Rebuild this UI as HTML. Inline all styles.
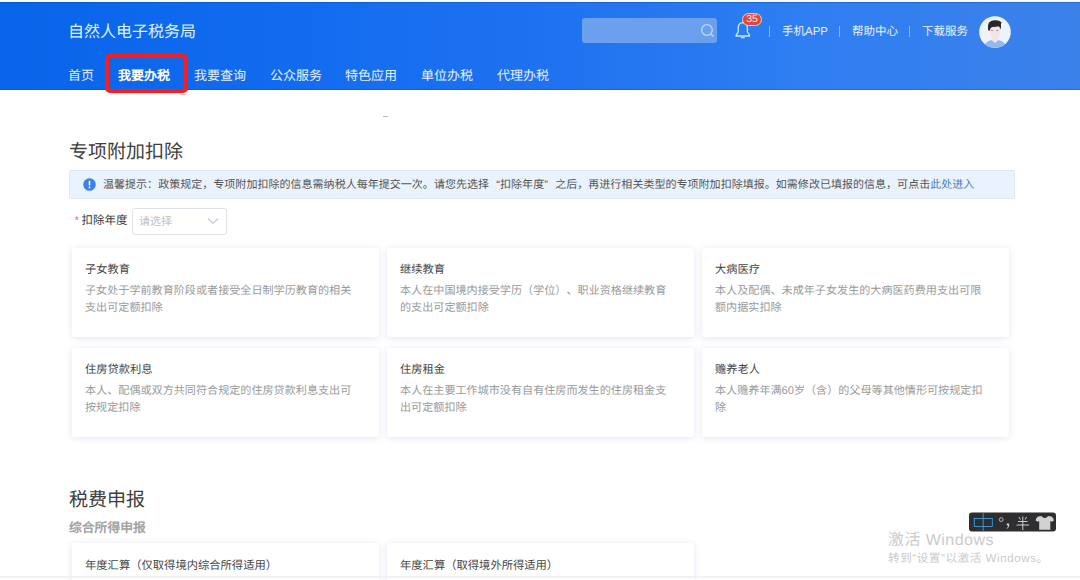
<!DOCTYPE html>
<html lang="zh-CN"><head><meta charset="utf-8">
<style>
*{margin:0;padding:0;box-sizing:border-box}
html,body{width:1080px;height:580px;overflow:hidden;background:#fff;text-rendering:geometricPrecision;text-spacing-trim:space-all;font-family:"Liberation Sans",sans-serif;color:#333}
.hdr{position:absolute;left:0;top:2px;width:1080px;height:88px;box-shadow:inset 0 1px 0 rgba(20,60,140,0.35),inset 0 -1px 0 rgba(20,60,140,0.3);background:linear-gradient(90deg,#0964e9 0%,#136cf0 29%,#1f72f0 51%,#2f7ef2 75%,#3c81ea 100%)}
.topline{position:absolute;left:0;top:0;width:1080px;height:2px;background:#f4fbfb}
.abs{position:absolute;white-space:nowrap}
.title{left:68px;top:24px;font-size:16px;color:#dff2fa;line-height:18px}
.nav{top:68px;font-size:13px;margin-left:-1px;color:#e6f0fb;line-height:15px}
.nav.b{font-weight:bold;color:#fff}
.redbox{position:absolute;left:105px;top:54px;width:83px;height:39px;border:4px solid #fb1c1c;border-radius:5px}
.search{position:absolute;left:582px;top:18px;width:135px;height:25px;background:#6ba0ef;border-radius:3px}
.rt{top:25px;font-size:11.5px;color:#e8f1fc;line-height:14px}
.sep{position:absolute;top:26px;width:1px;height:11px;background:#8cb4f2}
.page-title{font-size:19px;color:#404040;line-height:22px}
.info{position:absolute;left:69px;top:169.5px;width:946px;height:29.5px;background:#eaf3fd;border:1px solid #dfe7f1;border-radius:1.5px}
.info .ic{position:absolute;left:14px;top:8px;width:12px;height:12px;border-radius:50%;background:#3b82e6}
.info .ic:after{content:"";position:absolute;left:5px;top:2.5px;width:2px;height:4.5px;background:#fff;box-shadow:0 6px 0 -0px #fff}
.info .t{position:absolute;left:33px;top:8px;font-size:11px;line-height:13px;color:#555;white-space:nowrap;letter-spacing:0.03px}
.info .t a{color:#4f7bb8;text-decoration:none}
.card{position:absolute;width:307px;height:89px;background:#fff;border-radius:3px;box-shadow:0 1px 6px rgba(110,110,190,0.19)}
.card .h{position:absolute;left:13px;top:16px;font-size:11.25px;line-height:13px;color:#454545;white-space:nowrap}
.card .d{position:absolute;left:13px;top:35px;width:272px;font-size:11.1px;line-height:16.6px;color:#9a9a9a}
</style></head><body>
<div class="topline"></div>
<div class="hdr"></div>
<div class="abs title">自然人电子税务局</div>
<div class="abs nav" style="left:69px">首页</div>
<div class="abs nav b" style="left:119px">我要办税</div>
<div class="abs nav" style="left:195px">我要查询</div>
<div class="abs nav" style="left:271px">公众服务</div>
<div class="abs nav" style="left:346px">特色应用</div>
<div class="abs nav" style="left:422px">单位办税</div>
<div class="abs nav" style="left:498px">代理办税</div>
<div class="redbox"></div>

<div class="search"></div>
<svg class="abs" style="left:699px;top:22px" width="18" height="18" viewBox="0 0 18 18"><circle cx="8" cy="8" r="5.3" fill="none" stroke="#bfdcf6" stroke-width="1.2"/><line x1="12" y1="12" x2="14.5" y2="14.5" stroke="#bfdcf6" stroke-width="1.2"/></svg>
<svg class="abs" style="left:733px;top:20px" width="20" height="20" viewBox="0 0 20 20"><path d="M3 16 Q3 15 4.3 13.5 L5.2 12 L5.2 8 Q5.3 2.8 9.8 2.6 Q14.3 2.8 14.4 8 L14.4 12 L15.4 13.5 Q16.6 15 16.6 16 Z" fill="none" stroke="#c4eef6" stroke-width="1.3" stroke-linejoin="round"/><path d="M8.3 17.6 L11.3 17.6" stroke="#b9e6f2" stroke-width="1.2" stroke-linecap="round"/></svg>
<div class="abs" style="left:742px;top:12.5px;width:20px;height:13px;border-radius:7px;background:#dc4a3c;border:1.2px solid #f0c8c8;color:#fde8e0;font-size:10.5px;line-height:11px;text-align:center;padding-top:0.5px;letter-spacing:-0.2px">35</div>
<div class="sep" style="left:769px"></div>
<div class="abs rt" style="left:782px">手机APP</div>
<div class="sep" style="left:839px"></div>
<div class="abs rt" style="left:852px">帮助中心</div>
<div class="sep" style="left:909px"></div>
<div class="abs rt" style="left:922px">下载服务</div>
<svg class="abs" style="left:979px;top:15.8px" width="32" height="32" viewBox="0 0 32 32">
<defs><clipPath id="cc"><circle cx="16" cy="16" r="15.8"/></clipPath></defs>
<circle cx="16" cy="16" r="15.8" fill="#ecf4fa"/>
<g clip-path="url(#cc)">
<path d="M4 33 Q5 25.5 13 24 L16 27 L19 24 Q27 25.5 28 33 Z" fill="#94b8ec"/>
<path d="M13 24 L16 27 L19 24 L18.5 21 L13.5 21 Z" fill="#f6e2e6"/>
<path d="M10.4 8 L10.4 15 Q10.8 22.5 16 22.5 Q21 22.5 21.3 15 L21.3 8 Z" fill="#f6e3e8"/>
<path d="M9.2 14.5 Q8.4 8 10.5 6 Q13 3.8 16.5 4.2 Q20 4 22.6 6.2 L21.9 8 Q22.4 11 21.4 13.5 Q20.8 10.5 19.5 10.2 Q17 11.2 13 11 Q11.2 11.5 10.8 14.5 Z" fill="#2b2627"/>
<ellipse cx="13" cy="14.6" rx="1.1" ry="0.5" fill="#8a7f86"/>
<ellipse cx="18.3" cy="14.6" rx="1.1" ry="0.5" fill="#8a7f86"/>
</g></svg>

<div class="abs page-title" style="left:69px;top:141.5px;font-size:19px">专项附加扣除</div>
<div class="info"><svg style="position:absolute;left:13px;top:7.5px" width="13" height="13" viewBox="0 0 13 13"><circle cx="6.5" cy="6.5" r="6.3" fill="#3b82e6"/><rect x="5.7" y="2.8" width="1.6" height="4.8" rx="0.6" fill="#fff"/><circle cx="6.5" cy="9.4" r="0.9" fill="#fff"/></svg><div class="t">温馨提示：政策规定，专项附加扣除的信息需纳税人每年提交一次。请您先选择<span style="display:inline-block;width:11px;text-align:right">“</span>扣除年度<span style="display:inline-block;width:11px;text-align:left">”</span>之后，再进行相关类型的专项附加扣除填报。如需修改已填报的信息，可点击<a>此处进入</a></div></div>

<div class="abs" style="left:74.5px;top:214.5px;font-size:11.5px;color:#e87575;line-height:12px">*</div>
<div class="abs" style="left:81.5px;top:215px;font-size:11.5px;color:#383838;line-height:13px">扣除年度</div>
<div class="abs" style="left:132px;top:208px;width:95px;height:27px;border:1px solid #dfe2e8;border-radius:3px;background:#fff"></div>
<div class="abs" style="left:139px;top:216px;font-size:11px;color:#bfc3c9;line-height:13px">请选择</div>
<svg class="abs" style="left:206px;top:216px" width="14" height="10" viewBox="0 0 14 10"><path d="M2 2.5 L7 7.5 L12 2.5" fill="none" stroke="#c5c9cf" stroke-width="1.1"/></svg>

<div class="card" style="left:72px;top:248px"><div class="h">子女教育</div><div class="d">子女处于学前教育阶段或者接受全日制学历教育的相关支出可定额扣除</div></div>
<div class="card" style="left:387px;top:248px"><div class="h">继续教育</div><div class="d">本人在中国境内接受学历（学位）、职业资格继续教育的支出可定额扣除</div></div>
<div class="card" style="left:702px;top:248px"><div class="h">大病医疗</div><div class="d">本人及配偶、未成年子女发生的大病医药费用支出可限额内据实扣除</div></div>
<div class="card" style="left:72px;top:348px"><div class="h">住房贷款利息</div><div class="d">本人、配偶或双方共同符合规定的住房贷款利息支出可按规定扣除</div></div>
<div class="card" style="left:387px;top:348px"><div class="h">住房租金</div><div class="d">本人在主要工作城市没有自有住房而发生的住房租金支出可定额扣除</div></div>
<div class="card" style="left:702px;top:348px"><div class="h">赡养老人</div><div class="d">本人赡养年满60岁（含）的父母等其他情形可按规定扣除</div></div>

<div class="abs page-title" style="left:69px;top:489.5px;font-size:19px">税费申报</div>
<div class="abs" style="left:69px;top:520px;font-size:12.8px;font-weight:bold;color:#a3a3a3;line-height:15px">综合所得申报</div>
<div class="card" style="left:72px;top:543px"><div class="h" style="top:16.5px;font-size:11.3px">年度汇算（仅取得境内综合所得适用）</div></div>
<div class="card" style="left:387px;top:543px"><div class="h" style="top:16.5px;font-size:11.3px">年度汇算（取得境外所得适用）</div></div>

<div class="abs" style="left:888px;top:532px;font-size:16px;color:#cbcbcb;line-height:18px;letter-spacing:0.45px">激活 Windows</div>
<div class="abs" style="left:888px;top:552px;font-size:11.6px;color:#cbcbcb;line-height:13px;letter-spacing:0.55px">转到“设置”以激活 Windows。</div>
<svg class="abs" style="left:968px;top:511px" width="90" height="22" viewBox="0 0 90 22">
<rect x="1" y="1.5" width="87" height="19" rx="3" fill="#2e2e30"/>
<rect x="6.3" y="7.5" width="18" height="8" fill="none" stroke="#3a9fdc" stroke-width="0.9"/>
<line x1="15.2" y1="1" x2="15.2" y2="21" stroke="#3a9fdc" stroke-width="0.9"/>
<circle cx="33.2" cy="8.6" r="1.9" fill="none" stroke="#d6d6d6" stroke-width="0.8"/>
<circle cx="39.9" cy="13.4" r="1.2" fill="#d6d6d6"/><path d="M40.9 13.6 Q40.9 16 39 17.6" fill="none" stroke="#d6d6d6" stroke-width="1"/>
<g stroke="#dcdcdc" stroke-width="0.9" fill="none"><line x1="48.5" y1="14" x2="61" y2="14"/><line x1="50" y1="10.5" x2="59.5" y2="10.5"/><line x1="54.8" y1="5.5" x2="54.8" y2="19"/><line x1="51" y1="6" x2="52.4" y2="8.5"/><line x1="58.5" y1="6" x2="57.1" y2="8.5"/></g>
<path d="M70 5.5 L73.5 5 Q74.5 7 76.8 7 Q79 7 80 5 L83.5 5.5 Q85.5 7 86 9.5 L83.5 10.8 L82.3 10 L82.3 18.8 L71.2 18.8 L71.2 10 L70 10.8 L67.5 9.5 Q68 7 70 5.5 Z" fill="#d2d2d2"/>
</svg>
<div class="abs" style="left:0;top:576px;width:1080px;height:2px;background:#f0f1f5"></div>
<div class="abs" style="left:180px;top:94px;width:6px;height:1px;background:#c8c8c8"></div>
<div class="abs" style="left:383px;top:116px;width:5px;height:1px;background:#b8b8b8"></div>
</body></html>
